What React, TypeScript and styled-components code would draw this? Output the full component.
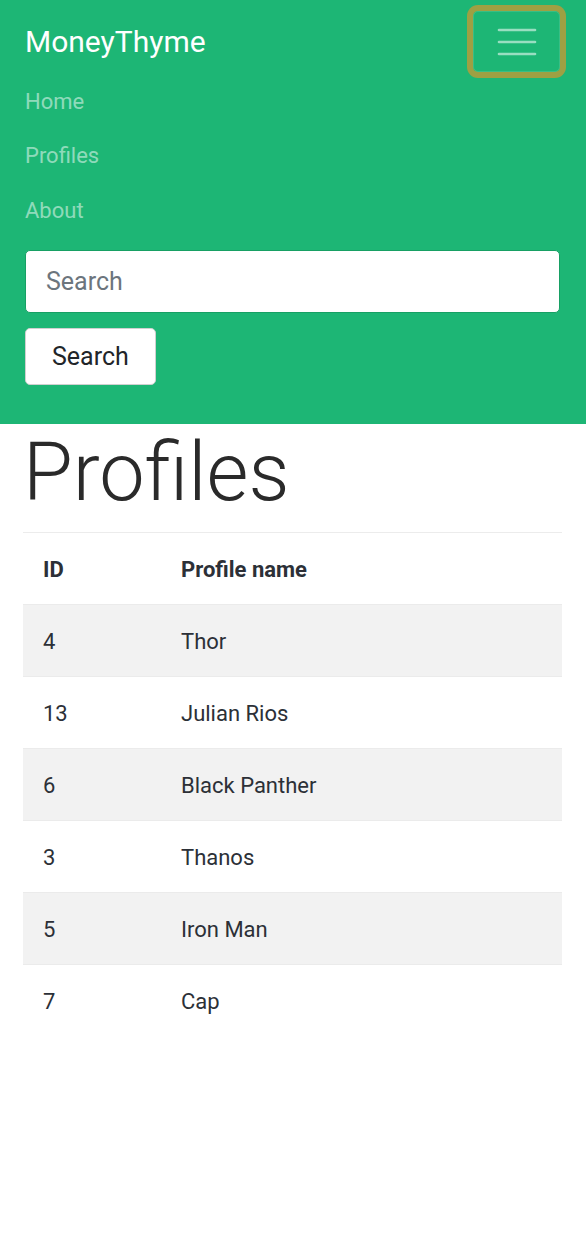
import React from "react";
import styled, { createGlobalStyle } from "styled-components";

const Global = createGlobalStyle`
  html, body { margin: 0; padding: 0; background: #fff; }
  body { font-family: Roboto, "Liberation Sans", Arial, sans-serif; color: #212529; }
  * { box-sizing: border-box; }
`;

const Navbar = styled.nav`
  background: #1db675;
  padding: 11px 26px 39px 25px;
  display: flex;
  flex-direction: column;
`;

const TopRow = styled.div`
  display: flex;
  align-items: center;
  justify-content: space-between;
  height: 61px;
`;

const Brand = styled.a`
  color: #fff;
  font-size: 30px;
  font-weight: 400;
  text-decoration: none;
  line-height: 1;
`;

const Toggler = styled.button`
  width: 87px;
  height: 61px;
  border: 1px solid rgba(255, 255, 255, 0.12);
  border-radius: 5px;
  background: transparent;
  box-shadow: 0 0 0 6px #9ea043;
  display: flex;
  align-items: center;
  justify-content: center;
  padding: 0;
`;

const NavList = styled.ul`
  list-style: none;
  margin: 2px 0 0;
  padding: 0;
`;

const NavItem = styled.li`
  height: 54.5px;
  display: flex;
  align-items: center;
`;

const NavLink = styled.a`
  color: rgba(255, 255, 255, 0.52);
  font-size: 22px;
  text-decoration: none;
`;

const Form = styled.form`
  margin-top: 12.5px;
  display: flex;
  flex-direction: column;
  align-items: flex-start;
  gap: 15px;
`;

const Input = styled.input`
  width: 100%;
  height: 63px;
  padding: 0 20px;
  font-family: inherit;
  font-size: 25px;
  color: #495057;
  background: #fff;
  border: 1px solid #17a064;
  border-radius: 5px;
  &::placeholder { color: #6c757d; }
`;

const Button = styled.button`
  height: 57px;
  padding: 0 26px;
  font-family: inherit;
  font-size: 25px;
  color: #212529;
  background: #fff;
  border: 1px solid #d0d0d0;
  border-radius: 5px;
`;

const Main = styled.main`
  padding: 0 24px 0 23px;
`;

const Title = styled.h1`
  margin: 0 0 11px 0;
  padding-left: 0;
  font-size: 81px;
  font-weight: 300;
  line-height: 97px;
  color: #2a2a2a;
`;

const Rule = styled.hr`
  margin: 0;
  border: 0;
  border-top: 1px solid #ececec;
`;

const Table = styled.table`
  width: 100%;
  border-collapse: collapse;
  font-size: 22px;
  color: #2c3037;
`;

const Row = styled.tr<{ $striped?: boolean }>`
  height: 72px;
  background: ${(p) => (p.$striped ? "#f2f2f2" : "transparent")};
  border-top: 1px solid #ebebeb;
`;

const HeadRow = styled.tr`
  height: 71px;
`;

const Th = styled.th`
  text-align: left;
  font-weight: 700;
  padding: 3px 20px 0;
`;

const Td = styled.td`
  padding: 3px 20px 0;
`;

const IdCell = styled(Td)`
  width: 138px;
`;

const IdHead = styled(Th)`
  width: 138px;
`;

function Burger() {
  return (
    <svg width="40" height="28" viewBox="0 0 40 28">
      <g stroke="rgba(255,255,255,0.55)" strokeWidth="2.6" strokeLinecap="round">
        <line x1="2" y1="2" x2="38" y2="2" />
        <line x1="2" y1="14" x2="38" y2="14" />
        <line x1="2" y1="26" x2="38" y2="26" />
      </g>
    </svg>
  );
}

const profiles = [
  { id: 4, name: "Thor" },
  { id: 13, name: "Julian Rios" },
  { id: 6, name: "Black Panther" },
  { id: 3, name: "Thanos" },
  { id: 5, name: "Iron Man" },
  { id: 7, name: "Cap" },
];

export default function App() {
  return (
    <>
      <Global />
      <Navbar>
        <TopRow>
          <Brand href="#">MoneyThyme</Brand>
          <Toggler aria-label="Toggle navigation">
            <Burger />
          </Toggler>
        </TopRow>
        <NavList>
          <NavItem><NavLink href="#">Home</NavLink></NavItem>
          <NavItem><NavLink href="#">Profiles</NavLink></NavItem>
          <NavItem><NavLink href="#">About</NavLink></NavItem>
        </NavList>
        <Form onSubmit={(e) => e.preventDefault()}>
          <Input placeholder="Search" />
          <Button type="submit">Search</Button>
        </Form>
      </Navbar>
      <Main>
        <Title>Profiles</Title>
        <Rule />
        <Table>
          <thead>
            <HeadRow>
              <IdHead>ID</IdHead>
              <Th>Profile name</Th>
            </HeadRow>
          </thead>
          <tbody>
            {profiles.map((p, i) => (
              <Row key={p.id} $striped={i % 2 === 0}>
                <IdCell>{p.id}</IdCell>
                <Td>{p.name}</Td>
              </Row>
            ))}
          </tbody>
        </Table>
      </Main>
    </>
  );
}
